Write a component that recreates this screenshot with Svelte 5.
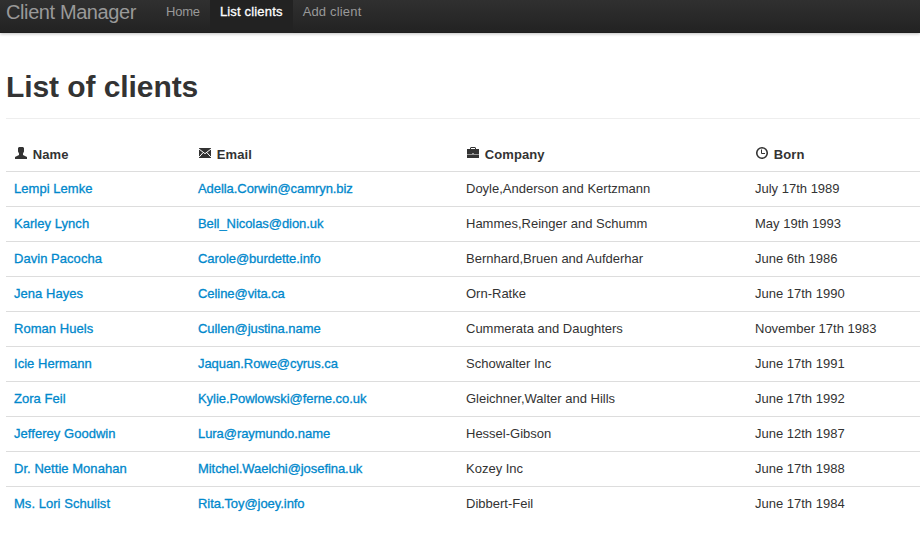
<script>
  const columns = [
    { label: 'Name', icon: 'user' },
    { label: 'Email', icon: 'envelope' },
    { label: 'Company', icon: 'briefcase' },
    { label: 'Born', icon: 'time' }
  ];
  const clients = [
    ['Lempi Lemke', 'Adella.Corwin@camryn.biz', 'Doyle,Anderson and Kertzmann', 'July 17th 1989'],
    ['Karley Lynch', 'Bell_Nicolas@dion.uk', 'Hammes,Reinger and Schumm', 'May 19th 1993'],
    ['Davin Pacocha', 'Carole@burdette.info', 'Bernhard,Bruen and Aufderhar', 'June 6th 1986'],
    ['Jena Hayes', 'Celine@vita.ca', 'Orn-Ratke', 'June 17th 1990'],
    ['Roman Huels', 'Cullen@justina.name', 'Cummerata and Daughters', 'November 17th 1983'],
    ['Icie Hermann', 'Jaquan.Rowe@cyrus.ca', 'Schowalter Inc', 'June 17th 1991'],
    ['Zora Feil', 'Kylie.Powlowski@ferne.co.uk', 'Gleichner,Walter and Hills', 'June 17th 1992'],
    ['Jefferey Goodwin', 'Lura@raymundo.name', 'Hessel-Gibson', 'June 12th 1987'],
    ['Dr. Nettie Monahan', 'Mitchel.Waelchi@josefina.uk', 'Kozey Inc', 'June 17th 1988'],
    ['Ms. Lori Schulist', 'Rita.Toy@joey.info', 'Dibbert-Feil', 'June 17th 1984']
  ];
</script>

<div class="page">
  <nav class="navbar">
    <a class="brand" href="#/">Client Manager</a>
    <a class="item home" href="#/">Home</a>
    <a class="item active" href="#/clients">List clients</a>
    <a class="item" href="#/add">Add client</a>
  </nav>
  <main>
    <header><h1>List of clients</h1></header>
    <table>
      <colgroup><col class="c1" /><col class="c2" /><col class="c3" /><col /></colgroup>
      <thead>
        <tr>
          {#each columns as col}
            <th>
              <svg width="14" height="14" viewBox="0 0 14 14" fill="#333">
                {#if col.icon === 'user'}
                  <path d="M5 1h4l1 1v3.500L9 7.500V9l4 2v2H1v-2l4-2V7.500L4 5.500V2z" />
                {:else if col.icon === 'envelope'}
                  <path d="M1 2h12v10H1z" />
                  <path d="M1 3l6 4.700L13 3M1 11.200l4.200-4.700M13 11.200L8.800 6.500" fill="none" stroke="#fff" stroke-width="1" />
                {:else if col.icon === 'briefcase'}
                  <path fill-rule="evenodd" d="M5 1h4l1 1v1h3v5.500H1V3h3V2zM5 2v1h4V2zM1 9h12v3H1z" />
                  <path d="M6 7h2v1H6z" fill="#999" />
                {:else}
                  <circle cx="7" cy="7" r="5.250" fill="none" stroke="#333" stroke-width="1.600" />
                  <path d="M6.500 3.500v4H10" fill="none" stroke="#333" stroke-width="1" />
                {/if}
              </svg>
              <span>{col.label}</span>
            </th>
          {/each}
        </tr>
      </thead>
      <tbody>
        {#each clients as client}
          <tr>
            <td><a href="#/client">{client[0]}</a></td>
            <td class="email"><a href="mailto:{client[1]}">{client[1]}</a></td>
            <td>{client[2]}</td>
            <td>{client[3]}</td>
          </tr>
        {/each}
      </tbody>
    </table>
  </main>
</div>

<style>
  :global(body) { margin: 0; background: #fff; }
  .page {
    height: 533px;
    overflow: hidden;
    font: 13px/18px "Liberation Sans", Arial, sans-serif;
    color: #333;
  }
  a { color: #08c; text-decoration: none; }
  .navbar {
    display: flex;
    height: 33px;
    background: linear-gradient(#303030, #222);
    box-shadow: 0 1px 3px rgba(0, 0, 0, .25), inset 0 -1px 0 rgba(0, 0, 0, .1);
  }
  .navbar a { color: #999; white-space: nowrap; }
  .navbar .brand { width: 150px; padding-left: 6px; font-size: 20px; line-height: 25px; letter-spacing: -.4px; }
  .navbar .item { padding: 3px 10px 12px; letter-spacing: .17px; }
  .navbar .home { letter-spacing: -.2px; }
  .navbar .active { color: #fff; background: #222; -webkit-text-stroke: .3px #fff; }
  main { padding-left: 6px; }
  header { height: 85px; border-bottom: 1px solid #eee; }
  h1 { margin: 0; padding-top: 36px; font-size: 30px; line-height: 36px; letter-spacing: -.08px; }
  table { width: 914px; margin-top: 18px; table-layout: fixed; border-collapse: separate; border-spacing: 0; }
  .c1 { width: 184px; }
  .c2 { width: 268px; }
  .c3 { width: 289px; }
  th, td { padding: 8px; text-align: left; vertical-align: top; white-space: nowrap; }
  td { border-top: 1px solid #ddd; }
  td a { letter-spacing: .04px; -webkit-text-stroke: .3px #08c; }
  .email a { letter-spacing: -.06px; }
  th { height: 18px; padding: 9px 8px 7px; letter-spacing: .1px; }
  th svg { display: inline-block; vertical-align: top; }
  th span { margin-left: 1px; }
</style>
